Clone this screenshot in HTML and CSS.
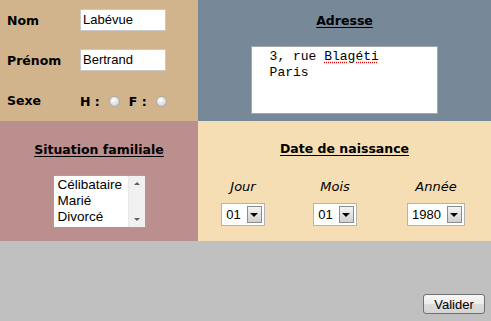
FILE: index.html
```html
<!DOCTYPE html>
<html lang="fr">
<head>
<meta charset="utf-8">
<title>Formulaire</title>
<link rel="stylesheet" href="styles.css">
</head>
<body>
<div class="page">
  <div class="grid">
    <div class="cell ident">
      <span class="lbl">Nom</span>
      <span class="field">Labévue</span>
      <span class="lbl">Prénom</span>
      <span class="field">Bertrand</span>
      <span class="lbl">Sexe</span>
      <span class="sexe"><span class="lbl">H :</span><span class="radio"></span><span class="lbl f">F :</span><span class="radio"></span></span>
    </div>
    <div class="cell adresse">
      <h2 class="title">Adresse</h2>
      <div class="textarea">  3, rue <span class="spell">Blagéti</span>
  Paris</div>
    </div>
    <div class="cell situation">
      <h2 class="title">Situation familiale</h2>
      <div class="listbox">
        <div class="options">
          <div>Célibataire</div>
          <div>Marié</div>
          <div>Divorcé</div>
        </div>
        <div class="scrollbar">
          <span class="sarrow up"></span>
          <span class="sarrow down"></span>
        </div>
      </div>
    </div>
    <div class="cell naissance">
      <h2 class="title">Date de naissance</h2>
      <div class="dates">
        <div class="dcol">
          <span class="dlbl">Jour</span>
          <span class="select"><span class="val">01</span><span class="btn"></span></span>
        </div>
        <div class="dcol">
          <span class="dlbl">Mois</span>
          <span class="select"><span class="val">01</span><span class="btn"></span></span>
        </div>
        <div class="dcol">
          <span class="dlbl">Année</span>
          <span class="select"><span class="val">1980</span><span class="btn"></span></span>
        </div>
      </div>
    </div>
  </div>
  <div class="footer">
    <button class="valider">Valider</button>
  </div>
</div>
</body>
</html>
```

FILE: styles.css
```css
html, body {
  margin: 0;
  padding: 0;
}
body {
  background: #c0c0c0;
  width: 491px;
  height: 321px;
  overflow: hidden;
  font-family: "DejaVu Sans", Verdana, sans-serif;
  color: #000;
}
.page {
  display: flex;
  flex-direction: column;
  height: 321px;
}
.grid {
  display: grid;
  grid-template-columns: 198px 293px;
  grid-template-rows: 121px 120px;
}
.cell {
  box-sizing: border-box;
}
.ident {
  background: #d2b48c;
  display: grid;
  grid-template-columns: 73px 86px;
  grid-auto-rows: 22px;
  row-gap: 18px;
  align-items: center;
  padding: 9px 0 0 7px;
}
.lbl {
  font-weight: bold;
  font-size: 12.5px;
  white-space: nowrap;
}
.field {
  box-sizing: border-box;
  height: 22px;
  background: #fff;
  border: 1px solid #c8c8c8;
  font-family: "Liberation Sans", Arial, sans-serif;
  font-size: 13px;
  line-height: 20px;
  padding-left: 2px;
}
.sexe {
  display: flex;
  align-items: center;
  white-space: nowrap;
  padding-top: 2px;
}
.radio {
  flex: none;
  box-sizing: border-box;
  width: 11px;
  height: 11px;
  border-radius: 50%;
  border: 1px solid #a8a8a8;
  background: radial-gradient(circle at 40% 35%, #ffffff 0%, #e4e4e4 45%, #c4c4c4 100%);
  margin-left: 9px;
}
.lbl.f {
  margin-left: 9px;
}
.adresse {
  background: #778899;
  display: flex;
  flex-direction: column;
  align-items: center;
  padding-top: 13px;
}
.title {
  margin: 0;
  font-size: 12.5px;
  font-weight: bold;
  text-decoration: underline;
  text-underline-offset: 2px;
  line-height: 16px;
  color: #000;
}
.textarea {
  box-sizing: border-box;
  margin-top: 17px;
  width: 187px;
  height: 68px;
  background: #fff;
  border: 1px solid #a0a8b0;
  padding: 2px;
  font-family: "Liberation Mono", "Courier New", monospace;
  font-size: 13px;
  line-height: 16px;
  white-space: pre;
}
.spell {
  text-decoration: underline dotted #e00000;
  text-underline-offset: 2px;
}
.situation {
  background: #bc8f8f;
  display: flex;
  flex-direction: column;
  align-items: center;
  padding-top: 21px;
}
.listbox {
  box-sizing: border-box;
  margin-top: 17px;
  width: 93px;
  height: 53px;
  background: #fff;
  border: 1px solid #a0a0a0;
  display: flex;
}
.options {
  flex: 1;
  font-family: "Liberation Sans", Arial, sans-serif;
  font-size: 13.5px;
  line-height: 16px;
  padding: 1px 0 0 4px;
}
.scrollbar {
  width: 16px;
  background: #f0f0f0;
  border-left: 1px solid #e8e8e8;
  display: flex;
  flex-direction: column;
  justify-content: space-between;
  align-items: center;
  padding: 6px 0;
}
.sarrow {
  width: 0;
  height: 0;
  border-left: 3px solid transparent;
  border-right: 3px solid transparent;
}
.sarrow.up {
  border-bottom: 3px solid #606060;
}
.sarrow.down {
  border-top: 3px solid #606060;
}
.naissance {
  background: #f5deb3;
  display: flex;
  flex-direction: column;
  align-items: center;
  padding-top: 20px;
}
.dates {
  margin-top: 21px;
  align-self: stretch;
  display: grid;
  grid-template-columns: 90px 94px 108px;
}
.dcol {
  display: flex;
  flex-direction: column;
  align-items: center;
  gap: 8px;
}
.dlbl {
  font-style: italic;
  font-size: 13px;
  line-height: 17px;
}
.select {
  box-sizing: border-box;
  height: 23px;
  background: #fff;
  border: 1px solid #b4b4b4;
  display: flex;
  align-items: center;
  padding: 0 2px 0 4px;
  font-family: "Liberation Sans", Arial, sans-serif;
  font-size: 13px;
}
.val {
  margin-right: 6px;
}
.btn {
  box-sizing: border-box;
  width: 15px;
  height: 17px;
  border: 1px solid #8c8c8c;
  background: linear-gradient(#f4f4f4, #d0d0d0);
  display: flex;
  align-items: center;
  justify-content: center;
}
.btn::after {
  content: "";
  width: 0;
  height: 0;
  border-left: 4px solid transparent;
  border-right: 4px solid transparent;
  border-top: 4px solid #000;
}
.footer {
  flex: 1;
  display: flex;
  justify-content: flex-end;
  align-items: flex-end;
  padding: 0 6px 7px 0;
}
.valider {
  box-sizing: border-box;
  width: 62px;
  height: 20px;
  padding: 0;
  border: 1px solid #707070;
  border-radius: 3px;
  background: linear-gradient(#f6f6f6 0%, #ececec 50%, #dcdcdc 51%, #d4d4d4 100%);
  font-family: "Liberation Sans", Arial, sans-serif;
  font-size: 13px;
  color: #000;
}
```
